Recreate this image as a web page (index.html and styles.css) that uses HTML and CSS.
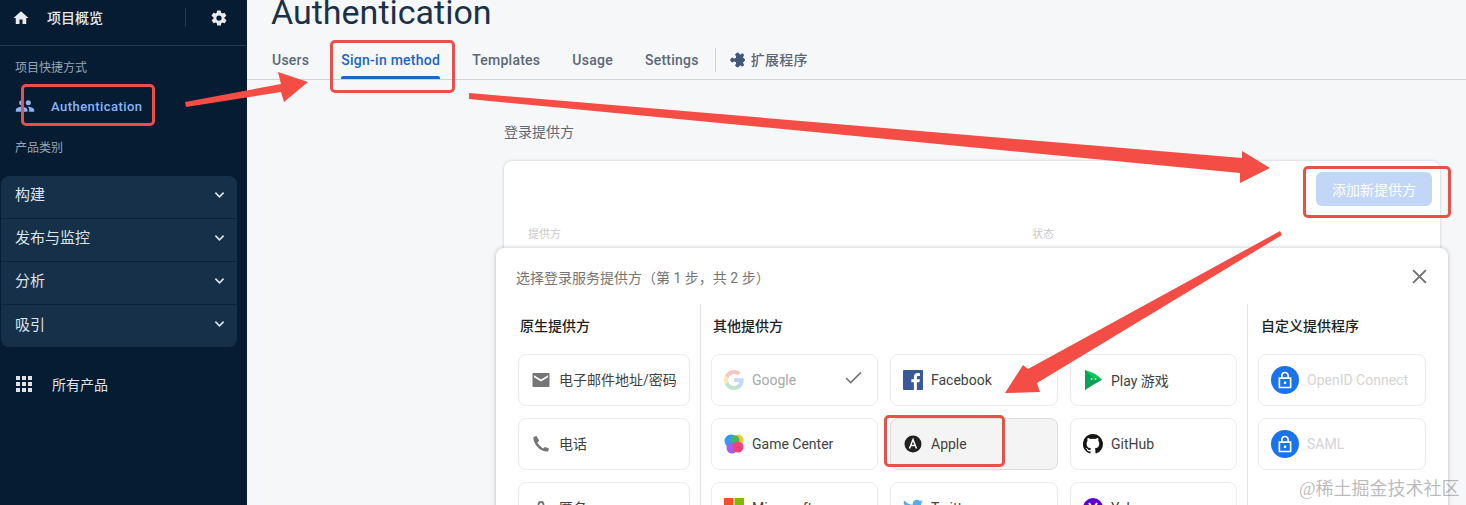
FILE: index.html
```html
<!DOCTYPE html>
<html lang="zh-CN">

<head>
    <meta charset="UTF-8">
    <meta name="viewport" content="width=device-width, initial-scale=1.0">
    <title>Authentication</title>
    <link rel="stylesheet" href="styles.css">
</head>

<body>
    <div class="page">
        <aside class="sidebar">
            <div class="project-row">
                <svg class="home-icon" viewBox="0 0 24 24"><path d="M10 20v-6h4v6h5v-8h3L12 3 2 12h3v8z"/></svg>
                <span class="project-name">项目概览</span>
                <span class="project-sep"></span>
                <svg class="gear-icon" viewBox="0 0 24 24"><path d="M19.4 13a7.5 7.5 0 0 0 0-2l2.1-1.6a.5.5 0 0 0 .1-.6l-2-3.5a.5.5 0 0 0-.6-.2l-2.5 1a7.3 7.3 0 0 0-1.7-1l-.4-2.6a.5.5 0 0 0-.5-.5h-4a.5.5 0 0 0-.5.4l-.4 2.7a7.6 7.6 0 0 0-1.7 1l-2.5-1a.5.5 0 0 0-.6.2l-2 3.5a.5.5 0 0 0 .1.6L4.6 11a7.9 7.9 0 0 0 0 2l-2.1 1.6a.5.5 0 0 0-.1.6l2 3.5c.1.2.4.3.6.2l2.5-1c.5.4 1.1.7 1.7 1l.4 2.6c0 .3.2.5.5.5h4c.3 0 .5-.2.5-.4l.4-2.7a7.6 7.6 0 0 0 1.7-1l2.5 1c.2.1.5 0 .6-.2l2-3.5a.5.5 0 0 0-.1-.6zM12 15.5a3.5 3.5 0 1 1 0-7 3.5 3.5 0 0 1 0 7z"/></svg>
            </div>
            <div class="side-label shortcut-label">项目快捷方式</div>
            <div class="shortcut">
                <svg class="people-icon" viewBox="0 0 24 24"><path d="M16 11a3 3 0 1 0 0-6 3 3 0 0 0 0 6zm-8 0a3 3 0 1 0 0-6 3 3 0 0 0 0 6zm0 2c-2.300 0-7 1.200-7 3.500V19h14v-2.500C15 14.200 10.300 13 8 13zm8 0h-1c1.200.8 2 2 2 3.500V19h6v-2.500c0-2.300-4.700-3.500-7-3.500z"/></svg>
                <span>Authentication</span>
            </div>
            <div class="side-label category-label">产品类别</div>
            <div class="category-group">
                <div class="category-row"><span>构建</span><svg viewBox="0 0 12 8"><path d="M1.500 1.500 6 6l4.500-4.500"/></svg></div>
                <div class="category-row"><span>发布与监控</span><svg viewBox="0 0 12 8"><path d="M1.500 1.500 6 6l4.500-4.500"/></svg></div>
                <div class="category-row"><span>分析</span><svg viewBox="0 0 12 8"><path d="M1.500 1.500 6 6l4.500-4.500"/></svg></div>
                <div class="category-row"><span>吸引</span><svg viewBox="0 0 12 8"><path d="M1.500 1.500 6 6l4.500-4.500"/></svg></div>
            </div>
            <div class="all-products">
                <span class="dots"><i></i><i></i><i></i><i></i><i></i><i></i><i></i><i></i><i></i></span>
                <span>所有产品</span>
            </div>
        </aside>

        <main class="content">
            <h1>Authentication</h1>
            <nav class="tabs">
                <a class="tab">Users</a>
                <a class="tab active">Sign-in method</a>
                <a class="tab">Templates</a>
                <a class="tab">Usage</a>
                <a class="tab">Settings</a>
                <span class="tab-sep"></span>
                <a class="tab ext-tab">
                    <svg viewBox="0 0 24 24"><path d="M20.500 11H19V7c0-1.100-.9-2-2-2h-4V3.500C13 2.120 11.880 1 10.500 1S8 2.120 8 3.500V5H4c-1.100 0-1.990.9-1.990 2v3.800H3.500c1.490 0 2.700 1.210 2.700 2.700s-1.210 2.700-2.700 2.700H2V20c0 1.100.9 2 2 2h3.800v-1.500c0-1.490 1.210-2.700 2.700-2.700 1.490 0 2.700 1.210 2.700 2.700V22H17c1.100 0 2-.9 2-2v-4h1.500c1.380 0 2.500-1.120 2.500-2.500S21.880 11 20.500 11z"/></svg>
                    扩展程序
                </a>
            </nav>
            <div class="providers-area">
                <h2>登录提供方</h2>
                <section class="providers-card">
                    <div class="card-top"><button type="button" class="add-button">添加新提供方</button></div>
                    <div class="card-head"><span class="head-provider">提供方</span><span>状态</span></div>
                </section>
                <section class="picker">
                    <header class="picker-head">
                        <span>选择登录服务提供方（第 1 步，共 2 步）</span>
                        <svg class="close-icon" viewBox="0 0 14 14"><path d="M1 1l12 12M13 1 1 13"/></svg>
                    </header>
                    <div class="picker-cols">
                        <div class="col col-native">
                            <h3>原生提供方</h3>
                            <div class="grid">
                                <div class="item">
                                    <svg class="ic" viewBox="0 0 18 18"><path fill="#757575" d="M1.500 2h15c.6 0 1 .4 1 1v12c0 .6-.4 1-1 1h-15c-.6 0-1-.4-1-1V3c0-.6.4-1 1-1zM9 8.500 2 4.300v1.900l7 4.300 7-4.300V4.300z"/></svg>
                                    <span>电子邮件地址/密码</span>
                                </div>
                                <div class="item">
                                    <svg class="ic" viewBox="0 0 18 18"><path fill="#757575" d="M4.500 1 1.500 2c-.4 2 .5 6 4 10s8.500 5 10.500 4.500l1-3-4-1.500-1.800 1.500C9.500 12.500 6 9 5.500 7.500L7.200 5.800z"/></svg>
                                    <span>电话</span>
                                </div>
                                <div class="item">
                                    <svg class="ic" viewBox="0 0 18 18"><path fill="none" stroke="#757575" stroke-width="1.800" d="M9 3a2.500 2.500 0 1 1 0 5 2.500 2.500 0 0 1 0-5zM3.500 15v-1.500C3.500 11.500 7 10.500 9 10.500s5.500 1 5.500 3V15z"/></svg>
                                    <span>匿名</span>
                                </div>
                            </div>
                        </div>
                        <div class="col col-other">
                            <h3>其他提供方</h3>
                            <div class="grid grid-three">
                                <div class="item muted">
                                    <svg class="ic faded" viewBox="0 0 20 20"><path fill="#4285f4" d="M19.600 10.200c0-.7-.1-1.400-.2-2H10v3.800h5.400a4.600 4.600 0 0 1-2 3v2.500h3.200c1.900-1.700 3-4.300 3-7.300z"/><path fill="#34a853" d="M10 20c2.700 0 5-.9 6.600-2.500l-3.200-2.500c-.9.600-2 1-3.400 1-2.600 0-4.800-1.800-5.600-4.100H1.100v2.600A10 10 0 0 0 10 20z"/><path fill="#fbbc05" d="M4.400 11.900a6 6 0 0 1 0-3.800V5.500H1.100a10 10 0 0 0 0 9z"/><path fill="#ea4335" d="M10 4c1.500 0 2.800.5 3.800 1.500l2.900-2.900A10 10 0 0 0 1.100 5.500l3.300 2.600C5.200 5.800 7.400 4 10 4z"/></svg>
                                    <span>Google</span>
                                    <svg class="check" viewBox="0 0 18 14"><path d="M1 7.500 6 12.500 17 1.500"/></svg>
                                </div>
                                <div class="item">
                                    <svg class="ic" viewBox="0 0 18 18"><rect width="18" height="18" rx="1" fill="#3b5998"/><path fill="#fff" d="M12.500 18v-7h2.300l.4-2.700h-2.700V6.600c0-.8.200-1.300 1.300-1.300h1.400V2.900c-.3 0-1.100-.1-2-.1-2 0-3.400 1.200-3.400 3.500v2H7.500V11h2.300v7z"/></svg>
                                    <span>Facebook</span>
                                </div>
                                <div class="item">
                                    <svg class="ic" viewBox="0 0 20 20"><path fill="#0f9d58" d="M2 0v20l8-5 9-5.200z"/><path fill="#00c853" d="M2 0l8 9 9 .8C15 5 9 2 2 0z"/><path fill="#00a65a" d="M2 20V0l8 10z"/><circle cx="8.500" cy="9" r="1" fill="#c8f7d8"/><circle cx="12.500" cy="9" r="1" fill="#c8f7d8"/></svg>
                                    <span>Play 游戏</span>
                                </div>
                                <div class="item">
                                    <svg class="ic" viewBox="0 0 20 20"><circle cx="7" cy="7" r="6.500" fill="#2f9bf4"/><circle cx="14" cy="6" r="5.500" fill="#fbc531"/><circle cx="11" cy="6" r="4.500" fill="#43b75d"/><circle cx="8" cy="14" r="5.500" fill="#a55ee8"/><circle cx="14" cy="13" r="5.500" fill="#f5407c"/></svg>
                                    <span>Game Center</span>
                                </div>
                                <div class="item hovered">
                                    <svg class="ic apple-ic" viewBox="0 0 18 18"><circle cx="9" cy="9" r="8.500" fill="#212121"/><path fill="none" stroke="#fff" stroke-width="1.500" d="M5.500 13.500 9 4.500l3.500 9M6.500 10.500h5"/></svg>
                                    <span>Apple</span>
                                </div>
                                <div class="item">
                                    <svg class="ic" viewBox="0 0 20 20"><path fill="#161614" fill-rule="evenodd" d="M10 0a10 10 0 0 0-3.200 19.500c.5.100.7-.2.700-.5v-1.700c-2.800.6-3.400-1.300-3.400-1.300-.4-1.200-1.100-1.500-1.100-1.500-.9-.6.100-.6.100-.6 1 .1 1.500 1 1.500 1 .9 1.500 2.300 1.100 2.900.8.100-.6.300-1.100.6-1.300-2.200-.3-4.500-1.100-4.500-4.900 0-1.100.4-2 1-2.700-.1-.3-.4-1.300.1-2.700 0 0 .8-.3 2.700 1a9.500 9.500 0 0 1 5 0c1.900-1.300 2.700-1 2.700-1 .5 1.400.2 2.400.1 2.700.6.700 1 1.600 1 2.700 0 3.800-2.300 4.700-4.500 4.900.4.300.7.900.7 1.900V19c0 .3.200.6.700.5A10 10 0 0 0 10 0z"/></svg>
                                    <span>GitHub</span>
                                </div>
                                <div class="item">
                                    <svg class="ic" viewBox="0 0 20 20"><rect width="9.500" height="9.500" fill="#f25022"/><rect x="10.500" width="9.500" height="9.500" fill="#7fba00"/><rect y="10.500" width="9.500" height="9.500" fill="#00a4ef"/><rect x="10.500" y="10.500" width="9.500" height="9.500" fill="#ffb900"/></svg>
                                    <span>Microsoft</span>
                                </div>
                                <div class="item">
                                    <svg class="ic" viewBox="0 0 20 20"><path fill="#55acee" d="M20 3.800c-.7.300-1.500.5-2.400.6.900-.5 1.500-1.300 1.800-2.300-.8.500-1.700.8-2.600 1a4.100 4.100 0 0 0-7 3.700A11.600 11.600 0 0 1 1.400 2.500a4.100 4.100 0 0 0 1.300 5.500c-.7 0-1.300-.2-1.900-.5 0 2 1.400 3.700 3.300 4.100-.6.200-1.200.2-1.800.1.500 1.600 2 2.800 3.800 2.800A8.200 8.200 0 0 1 0 16.200 11.600 11.600 0 0 0 18 6c.8-.6 1.500-1.300 2-2.200z"/></svg>
                                    <span>Twitter</span>
                                </div>
                                <div class="item">
                                    <svg class="ic" viewBox="0 0 20 20"><circle cx="10" cy="10" r="10" fill="#5f01d1"/><path fill="none" stroke="#fff" stroke-width="2" d="M6 5l4 6 4-6M10 11v4"/></svg>
                                    <span>Yahoo</span>
                                </div>
                            </div>
                        </div>
                        <div class="col col-custom">
                            <h3>自定义提供程序</h3>
                            <div class="grid">
                                <div class="item muted">
                                    <span class="lock"><svg viewBox="0 0 16 16"><path fill="none" stroke="#fff" stroke-width="1.300" d="M3.500 6.500h9v7.500h-9zM5.500 6.500V4.500a2.500 2.500 0 0 1 5 0v2"/><circle cx="8" cy="10.200" r="1.100" fill="#fff"/></svg></span>
                                    <span>OpenID Connect</span>
                                </div>
                                <div class="item muted">
                                    <span class="lock"><svg viewBox="0 0 16 16"><path fill="none" stroke="#fff" stroke-width="1.300" d="M3.500 6.500h9v7.500h-9zM5.500 6.500V4.500a2.500 2.500 0 0 1 5 0v2"/><circle cx="8" cy="10.200" r="1.100" fill="#fff"/></svg></span>
                                    <span>SAML</span>
                                </div>
                            </div>
                        </div>
                    </div>
                </section>
            </div>
        </main>
    </div>

    <!-- red notes drawn over the screenshot -->
    <span class="mark mark-auth"></span>
    <span class="mark mark-tab"></span>
    <span class="mark mark-add"></span>
    <span class="mark mark-apple"></span>
    <svg class="arrows" viewBox="0 0 1466 505">
        <polygon points="185,102 281,84 278,72 308,82 284,102 281,92 186,107"/>
        <polygon points="469,93 1242,158 1242,151 1270,168 1240,183 1240,173 469,99"/>
        <polygon points="1280,231 1282,235 1037,383 1040,392 1005,393 1023,365 1028,369"/>
    </svg>
    <div class="watermark">@稀土掘金技术社区</div>
</body>

</html>
```

FILE: styles.css
```css
* {
    box-sizing: border-box;
}

body {
    margin: 0;
    height: 505px;
    overflow: hidden;
    position: relative;
    background-color: #f6f7f9;
    font-family: Roboto, "Noto Sans CJK SC", sans-serif;
}

.page {
    display: flex;
    height: 505px;
    overflow: hidden;
}

/* sidebar */
.sidebar {
    width: 247px;
    flex-shrink: 0;
    background-color: #051c33;
    color: #e8eaed;
}

.project-row {
    display: flex;
    align-items: center;
    height: 46px;
    padding: 0 19px 10px 12px;
    border-bottom: 1px solid #24394e;
}

.home-icon {
    width: 18px;
    height: 18px;
    fill: #e8eaed;
}

.project-name {
    margin: -2px 0 0 17px;
    font-size: 14px;
    font-weight: 500;
    flex: 1;
}

.project-sep {
    width: 1px;
    height: 19px;
    background-color: #24394e;
    margin-right: 24px;
}

.gear-icon {
    width: 18px;
    height: 18px;
    fill: #e8eaed;
}

.side-label {
    font-size: 12px;
    line-height: 16px;
    color: #9aa5b1;
    padding-left: 15px;
}

.shortcut-label {
    margin-top: 14px;
}

.shortcut {
    display: flex;
    align-items: center;
    height: 30px;
    margin-top: 15px;
    padding-left: 15px;
    font-size: 13px;
    font-weight: 500;
    letter-spacing: 0.45px;
    color: #8ab4f8;
}

.people-icon {
    width: 20px;
    height: 20px;
    fill: #8ab4f8;
    margin-right: 16px;
}

.category-label {
    margin-top: 19px;
}

.category-group {
    margin: 20px 10px 0 1px;
    background-color: #16304a;
    border-radius: 8px;
    height: 171px;
    overflow: hidden;
}

.category-row {
    display: flex;
    align-items: center;
    justify-content: space-between;
    height: 43px;
    padding: 0 12px 7px 14px;
    font-size: 15px;
    font-weight: 400;
    color: #dfe3e8;
    border-bottom: 1px solid #08233a;
}

.category-row:last-child {
    border-bottom: none;
}

.category-row svg {
    width: 11px;
    height: 8px;
    margin-top: 2px;
    fill: none;
    stroke: #dfe3e8;
    stroke-width: 1.800;
}

.all-products {
    display: flex;
    align-items: center;
    margin-top: 27px;
    padding-left: 16px;
    font-size: 14px;
    font-weight: 400;
    color: #dfe3e8;
    height: 20px;
}

.dots {
    display: grid;
    grid-template-columns: repeat(3, 4px);
    gap: 2px;
    margin-right: 20px;
}

.dots i {
    display: block;
    width: 4px;
    height: 4px;
    background-color: #dfe3e8;
}

/* main */
.content {
    flex: 1;
    min-width: 0;
}

h1 {
    margin: -9px 0 0 24px;
    font-size: 34px;
    line-height: 42px;
    font-weight: 400;
    color: #1b3149;
}

.tabs {
    display: flex;
    height: 47px;
    padding-left: 25px;
    gap: 32px;
    border-bottom: 1px solid #cfd3d7;
}

.tab {
    position: relative;
    height: 46px;
    padding-top: 17px;
    font-size: 14px;
    line-height: 20px;
    font-weight: 500;
    letter-spacing: 0.25px;
    color: #5a6779;
}

.tab.active {
    color: #1a66c9;
}

.tab.active::after {
    content: "";
    position: absolute;
    left: 0;
    right: 0;
    bottom: 0;
    height: 3px;
    border-radius: 2px 2px 0 0;
    background-color: #1a66c9;
}

.tab-sep {
    width: 1px;
    height: 24px;
    margin: 15px -17px 0 -16px;
    background-color: #cfd3d7;
}

.ext-tab {
    display: flex;
    align-items: flex-start;
    gap: 4px;
}

.ext-tab svg {
    width: 16px;
    height: 16px;
    margin-top: 2px;
    fill: #41587a;
    transform: rotate(45deg);
}

.providers-area {
    position: relative;
    padding-left: 257px;
}

h2 {
    margin: 0;
    padding-top: 43px;
    font-size: 14px;
    line-height: 18px;
    font-weight: 400;
    color: #5f6875;
}

.providers-card {
    width: 936px;
    height: 140px;
    margin-top: 20px;
    background-color: #fff;
    border-radius: 8px 8px 0 0;
    box-shadow: 0 0 3px rgba(0, 0, 0, 0.2);
}

.card-top {
    display: flex;
    justify-content: flex-end;
    padding: 11px 8px 0 0;
}

.add-button {
    width: 116px;
    height: 34px;
    border: none;
    border-radius: 6px;
    background-color: #c2d6f7;
    color: #fff;
    font-family: inherit;
    font-size: 14px;
    font-weight: 400;
}

.card-head {
    display: flex;
    margin-top: 22px;
    padding-left: 24px;
    font-size: 11px;
    line-height: 14px;
    color: #c9c9c9;
}

.head-provider {
    width: 504px;
}

.picker {
    position: absolute;
    left: 249px;
    top: 168px;
    width: 952px;
    height: 300px;
    background-color: #fff;
    border-radius: 8px;
    box-shadow: 0 0 4px rgba(0, 0, 0, 0.25);
}

.picker-head {
    display: flex;
    align-items: center;
    justify-content: space-between;
    height: 56px;
    padding: 5px 21px 4px 20px;
    font-size: 14px;
    color: #757575;
}

.close-icon {
    width: 15px;
    height: 15px;
    fill: none;
    stroke: #6f6f6f;
    stroke-width: 1.700;
}

.picker-cols {
    display: flex;
    height: 244px;
}

.col {
    border-right: 1px solid #e3e3e3;
}

.col h3 {
    margin: 0;
    padding-top: 13px;
    font-size: 14px;
    line-height: 18px;
    font-weight: 500;
    color: #212121;
}

.col-native {
    width: 205px;
    padding-left: 22px;
}

.col-native h3 {
    padding-left: 2px;
}

.col-other {
    width: 547px;
    padding-left: 10px;
}

.col-other h3 {
    padding-left: 2px;
}

.col-custom {
    flex: 1;
    border-right: none;
    padding-left: 10px;
}

.col-custom h3 {
    padding-left: 3px;
}

.grid {
    display: grid;
    grid-template-columns: 172px;
    gap: 12px;
    margin-top: 19px;
}

.col-custom .grid {
    grid-template-columns: 168px;
}

.grid-three {
    grid-template-columns: 167px 168px 167px;
}

.item {
    display: flex;
    align-items: center;
    height: 52px;
    padding-left: 12px;
    border: 1px solid #ececec;
    border-radius: 8px;
    font-size: 14px;
    color: #424242;
    background-color: #fff;
}

.ic {
    width: 18px;
    height: 18px;
    flex-shrink: 0;
    margin: 0 9px 0 1px;
}

.col-native .item span {
    padding-bottom: 2px;
}

.grid-three .ic {
    width: 20px;
    height: 20px;
    margin: 0 8px 0 0;
}

.grid-three .apple-ic {
    width: 18px;
    height: 18px;
    margin: 0 9px 0 1px;
}

.faded {
    opacity: 0.3;
}

.item.muted {
    color: #a8a8a8;
}

.col-custom .item.muted {
    color: #d4d4d4;
}

.item.hovered {
    background-color: #f4f4f4;
    border-color: #dcdcdc;
}

.check {
    width: 17px;
    height: 13px;
    margin-left: auto;
    margin-right: 15px;
    margin-top: -6px;
    fill: none;
    stroke: #757575;
    stroke-width: 1.700;
}

.lock {
    display: flex;
    align-items: center;
    justify-content: center;
    width: 28px;
    height: 28px;
    margin-right: 8px;
    border-radius: 50%;
    background-color: #1a73e8;
}

.lock svg {
    width: 20px;
    height: 20px;
}

/* notes on top of the screenshot */
.mark {
    position: absolute;
    border: 3px solid #ea4f48;
    border-radius: 5px;
}

.mark-auth {
    left: 21px;
    top: 84px;
    width: 134px;
    height: 42px;
}

.mark-tab {
    left: 330px;
    top: 40px;
    width: 125px;
    height: 53px;
}

.mark-add {
    left: 1303px;
    top: 166px;
    width: 148px;
    height: 52px;
}

.mark-apple {
    left: 884px;
    top: 415px;
    width: 121px;
    height: 52px;
}

.arrows {
    position: absolute;
    left: 0;
    top: 0;
    width: 1466px;
    height: 505px;
    fill: #f44d45;
    pointer-events: none;
}

.watermark {
    position: absolute;
    left: 1299px;
    top: 478px;
    font-family: "Liberation Serif", "Noto Sans CJK SC", serif;
    font-size: 18px;
    line-height: 22px;
    color: rgba(120, 120, 120, 0.5);
}
```
